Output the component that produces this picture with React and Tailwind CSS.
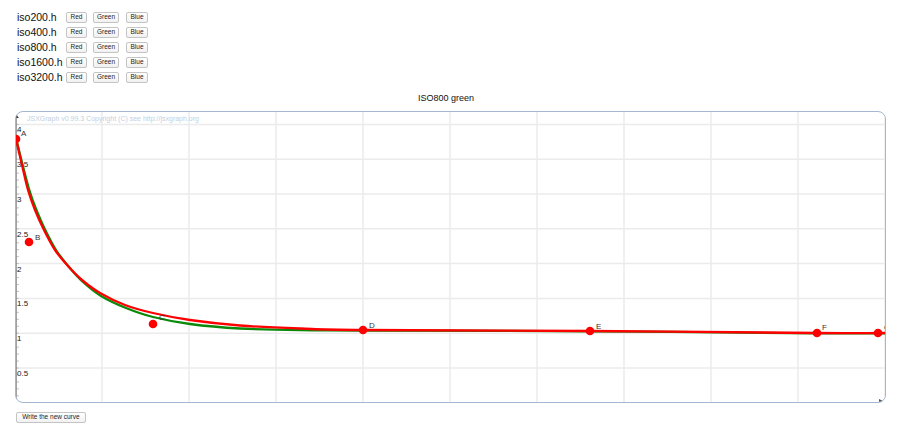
import React from "react";

const rows = ["iso200.h", "iso400.h", "iso800.h", "iso1600.h", "iso3200.h"];

function toPath(pts) {
  let d = `M${pts[0][0]},${pts[0][1]}`;
  for (let i = 0; i < pts.length - 1; i++) {
    const p0 = pts[i - 1] || pts[i];
    const p1 = pts[i];
    const p2 = pts[i + 1];
    const p3 = pts[i + 2] || p2;
    const c1x = p1[0] + (p2[0] - p0[0]) / 6;
    const c1y = p1[1] + (p2[1] - p0[1]) / 6;
    const c2x = p2[0] - (p3[0] - p1[0]) / 6;
    const c2y = p2[1] - (p3[1] - p1[1]) / 6;
    d += ` C${c1x.toFixed(2)},${c1y.toFixed(2)} ${c2x.toFixed(2)},${c2y.toFixed(2)} ${p2[0]},${p2[1]}`;
  }
  return d;
}

const red = [
  [16, 139], [22, 165], [28, 190], [35, 210], [44, 230], [55, 250], [68, 266],
  [82, 280], [100, 293], [125, 305], [153, 313], [190, 320], [240, 325.5],
  [300, 328.5], [363, 330], [590, 331], [817, 333], [878, 333], [892, 333],
];
const green = [
  [16, 138], [22.5, 164.5], [29, 189], [36, 209], [45, 229.5], [56, 250], [69, 267],
  [83, 282], [101, 296], [126, 308], [153, 317], [190, 324], [240, 328.5],
  [300, 330.2], [363, 330.5], [590, 331.3], [817, 333.3], [892, 333.3],
];

const points = [
  { n: "A", x: 16, y: 139, lx: 21, ly: 136 },
  { n: "B", x: 29, y: 242, lx: 35, ly: 240 },
  { n: "C", x: 153, y: 324, lx: 159, ly: 320 },
  { n: "D", x: 363, y: 330, lx: 369, ly: 328 },
  { n: "E", x: 590, y: 331, lx: 596, ly: 329 },
  { n: "F", x: 817, y: 333, lx: 822, ly: 330 },
  { n: "G", x: 878, y: 333, lx: 884, ly: 330 },
];

const unit = 69.6;
const y0 = 402.8;
const hLines = [0.5, 1, 1.5, 2, 2.5, 3, 3.5, 4];
const vLines = [102, 189, 276, 363, 450, 537, 624, 711, 798, 885];
const labels = { 0.5: "0.5", 1: "1", 1.5: "1.5", 2: "2", 2.5: "2.5", 3: "3", 3.5: "3.5", 4: "4" };

function Btn({ children, w }) {
  return (
    <button
      className={`${w} h-[11px] rounded-[2px] border border-[#c4c4c4] bg-gradient-to-b from-white to-[#f1f1f1] text-[6.5px] leading-none text-[#222] flex items-center justify-center`}
    >
      {children}
    </button>
  );
}

export default function App() {
  const ticks = [];
  for (let v = 0.1; v < 4.3; v += 0.1) ticks.push(v);
  return (
    <div className="w-[900px] h-[434px] bg-white font-['Liberation_Sans',Arial,sans-serif] text-black overflow-hidden">
      <div className="pt-[10px] pl-[17px] flex flex-col">
        {rows.map((r) => (
          <div key={r} className="h-[15px] flex items-center">
            <div className="w-[49px] text-[10.5px] leading-none text-[#111]">{r}</div>
            <div className="flex items-center">
              <Btn w="w-[21px]">Red</Btn>
              <div className="w-[6px]" />
              <Btn w="w-[26px]">Green</Btn>
              <div className="w-[7px]" />
              <Btn w="w-[22px]">Blue</Btn>
            </div>
          </div>
        ))}
      </div>
      <div className="h-[26px] flex items-center pl-[418px] text-[9px] leading-none text-[#111]">
        ISO800 green
      </div>
      <div className="ml-[15px] w-[871px] h-[292px] border border-[#a3b6d2] rounded-[8px] overflow-hidden">
        <svg width="869" height="290" className="block">
          <g transform="translate(-16,-112)">
            {vLines.map((x) => (
              <line key={x} x1={x} y1={100} x2={x} y2={410} stroke="#ebebeb" strokeWidth="1.5" />
            ))}
            {hLines.map((v) => (
              <line key={v} x1={10} y1={y0 - v * unit} x2={900} y2={y0 - v * unit} stroke="#ebebeb" strokeWidth="1.5" />
            ))}
            {ticks.map((v, i) => (
              <line key={i} x1={16} y1={y0 - v * unit} x2={19} y2={y0 - v * unit} stroke="#b8b8b8" strokeWidth="0.8" />
            ))}
            <line x1={16.5} y1={112} x2={16.5} y2={403} stroke="#8a8a8a" strokeWidth="0.8" />
            <polygon points="16,113 18.5,118 13.5,118" fill="#333" />
            <polygon points="884,401.5 879,399 879,404" fill="#555" />
            {hLines.map((v) => (
              <text key={v} x={17} y={y0 - v * unit + 8} fontSize="8" fill="#222" fontFamily="Liberation Sans, Arial, sans-serif">
                {labels[v]}
              </text>
            ))}
            <text x={27} y={120.5} fontSize="7" fill="#c3cfe0" fontFamily="Liberation Sans, Arial, sans-serif">
              JSXGraph v0.99.3 Copyright (C) see http://jsxgraph.org
            </text>
            <path d={toPath(green)} fill="none" stroke="#0a8a0a" strokeWidth="2.3" />
            <path d={toPath(red)} fill="none" stroke="#ff0000" strokeWidth="2.3" />
            {points.map((p) => (
              <g key={p.n}>
                <circle cx={p.x} cy={p.y} r={4.3} fill="#ff0000" />
                <text x={p.lx} y={p.ly} fontSize="8" fill="#333" fontFamily="Liberation Sans, Arial, sans-serif">
                  {p.n}
                </text>
              </g>
            ))}
          </g>
        </svg>
      </div>
      <div className="pl-[16px] pt-[9px]">
        <button className="w-[70px] h-[11px] rounded-[2px] border border-[#c4c4c4] bg-gradient-to-b from-white to-[#f1f1f1] text-[6.5px] leading-none text-[#222] flex items-center justify-center">
          Write the new curve
        </button>
      </div>
    </div>
  );
}
